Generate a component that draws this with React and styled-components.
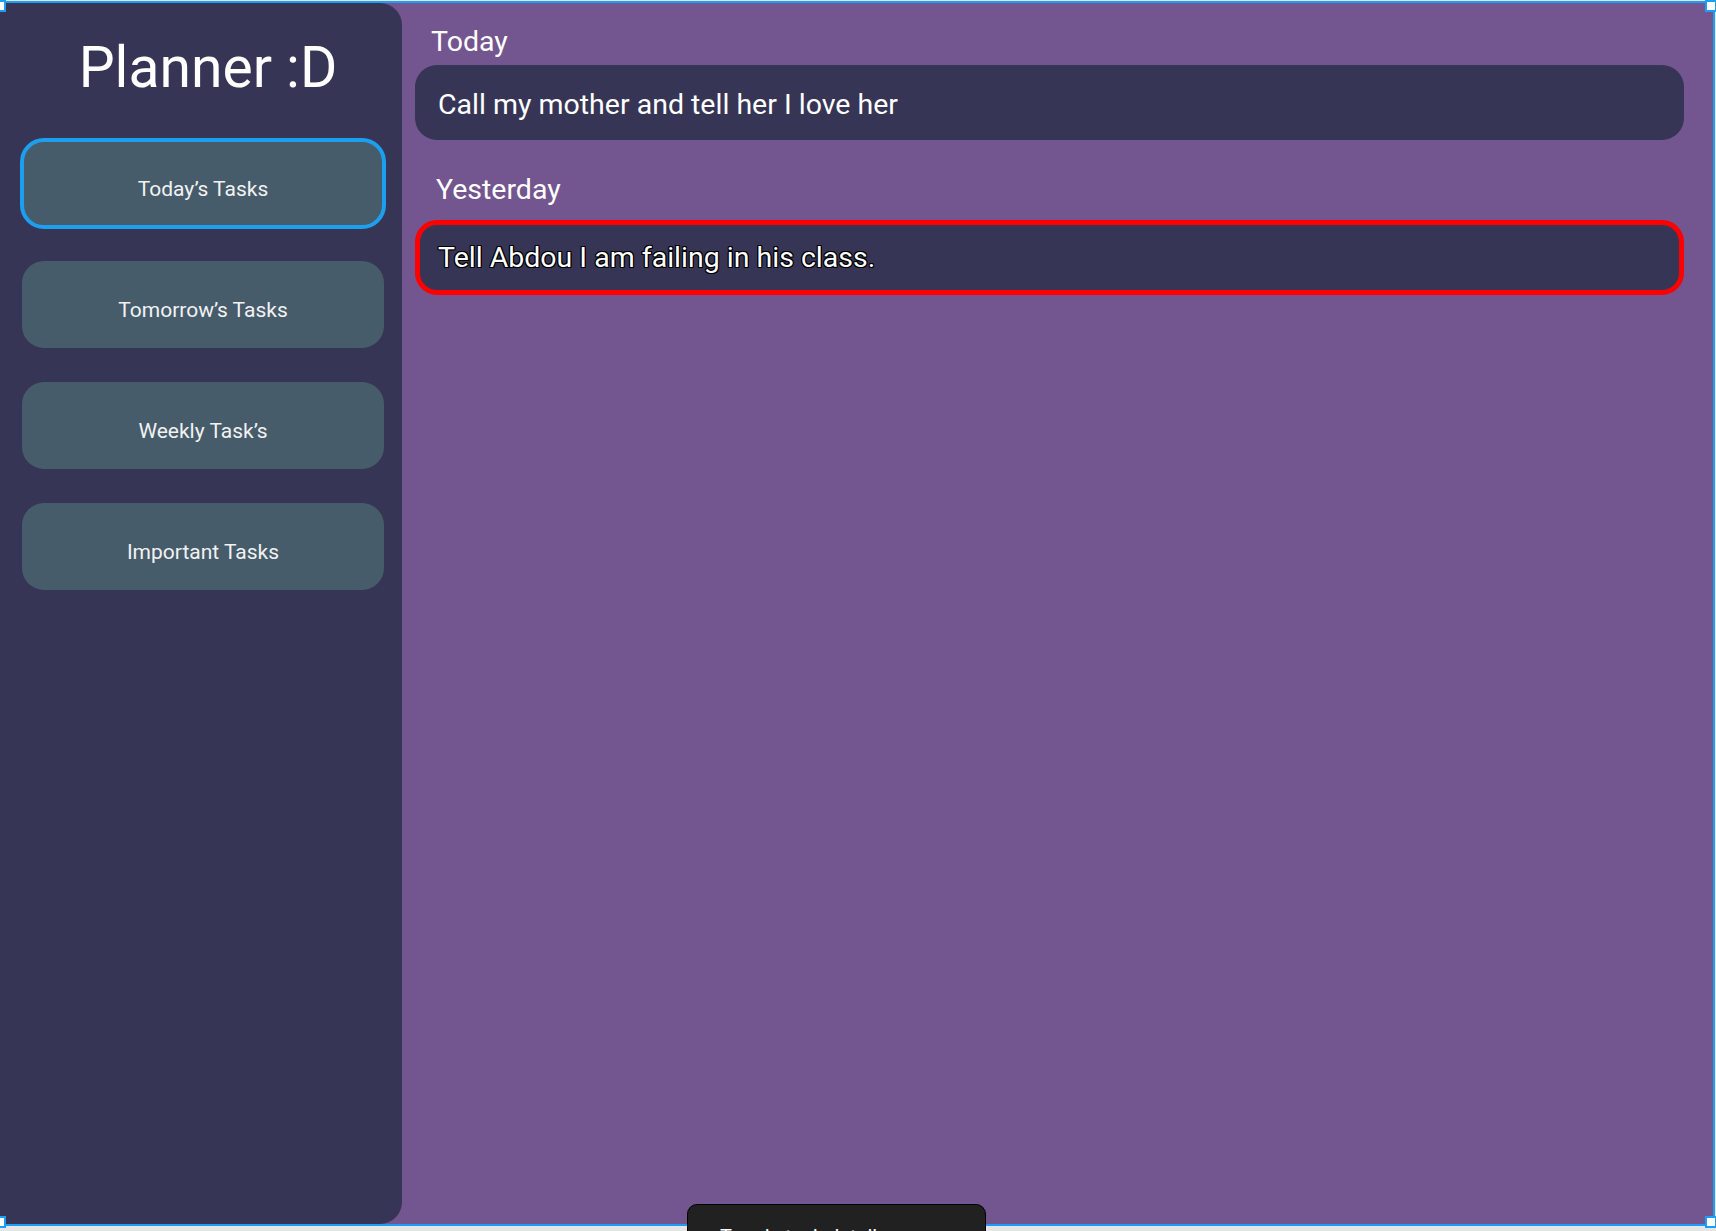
import React from "react";
import styled, { createGlobalStyle, css } from "styled-components";

const Global = createGlobalStyle`
  html, body {
    margin: 0;
    padding: 0;
    height: 100%;
    overflow: hidden;
    background: #e5e5e5;
    font-family: Roboto, "Noto Sans", "Liberation Sans", sans-serif;
  }
  * { box-sizing: border-box; }
`;

const Canvas = styled.div`
  position: relative;
  width: 1716px;
  height: 1231px;
  padding-top: 1px;
`;

const Frame = styled.div`
  position: relative;
  display: flex;
  width: 1715px;
  height: 1225px;
  border-top: 2px solid #1b9ff6;
  border-right: 2px solid #1b9ff6;
  border-bottom: 2px solid #1b9ff6;
  background: #73558f;
`;

const Sidebar = styled.aside`
  display: flex;
  flex-direction: column;
  width: 402px;
  flex-shrink: 0;
  background: #373555;
  border-radius: 0 22px 22px 0;
  padding: 30px 18px 0 22px;
`;

const Title = styled.h1`
  margin: 0;
  font-size: 57px;
  line-height: 70px;
  font-weight: 400;
  color: #ffffff;
  text-align: center;
  padding-left: 10px;
`;

const NavList = styled.nav`
  display: flex;
  flex-direction: column;
  gap: 34px;
  margin-top: 37px;
`;

const NavButton = styled.button`
  height: 87px;
  width: 100%;
  border: none;
  border-radius: 22px;
  background: #465c6a;
  color: #f2f2f2;
  font-family: inherit;
  font-size: 21px;
  font-weight: 400;
  padding: 11px 0 0;
  cursor: pointer;
  ${(p) =>
    p.$active &&
    css`
      outline: 4px solid #1d9ff0;
      outline-offset: -2px;
    `}
`;

const Main = styled.main`
  flex: 1;
  display: flex;
  flex-direction: column;
  padding: 24px 29px 0 13px;
`;

const Label = styled.h2`
  margin: ${(p) => p.$top}px 0 ${(p) => p.$gap}px;
  padding-left: ${(p) => p.$indent}px;
  font-size: 28.5px;
  line-height: 30px;
  font-weight: 400;
  color: #ffffff;
`;

const Card = styled.div`
  display: flex;
  align-items: center;
  height: 75px;
  border-radius: 22px;
  background: #373555;
  padding: 4px 0 0 23px;
  font-size: 28.5px;
  color: #ffffff;
  ${(p) =>
    p.$flagged &&
    css`
      border: 5px solid #ff0000;
      padding: 0 0 0 18px;
      text-shadow: -1px -1px 0 #000, 1px -1px 0 #000, -1px 1px 0 #000,
        1px 1px 0 #000, 0 1px 0 #000, 0 -1px 0 #000, 1px 0 0 #000,
        -1px 0 0 #000;
    `}
`;

const Handle = styled.span`
  position: absolute;
  width: 12px;
  height: 12px;
  background: #ffffff;
  border: 2px solid #1b9ff6;
  top: ${(p) => p.$top}px;
  left: ${(p) => p.$left}px;
`;

const Toast = styled.div`
  position: absolute;
  left: 687px;
  top: 1204px;
  width: 299px;
  height: 60px;
  background: #212121;
  border: 1px solid #000;
  border-radius: 10px 10px 0 0;
  padding: 20px 0 0 32px;
  color: #ffffff;
  font-size: 20px;
  line-height: 24px;
  white-space: nowrap;
`;

const tabs = [
  { label: "Today\u2019s Tasks", active: true },
  { label: "Tomorrow\u2019s Tasks" },
  { label: "Weekly Task\u2019s" },
  { label: "Important Tasks" },
];

export default function App() {
  return (
    <>
      <Global />
      <Canvas>
        <Frame>
          <Sidebar>
            <Title>Planner :D</Title>
            <NavList>
              {tabs.map((t) => (
                <NavButton key={t.label} $active={t.active}>
                  {t.label}
                </NavButton>
              ))}
            </NavList>
          </Sidebar>
          <Main>
            <Label $top={0} $gap={8} $indent={16}>
              Today
            </Label>
            <Card>Call my mother and tell her I love her</Card>
            <Label $top={35} $gap={15} $indent={21}>
              Yesterday
            </Label>
            <Card $flagged>Tell Abdou I am failing in his class.</Card>
          </Main>
          <Handle $top={-3} $left={-6} />
          <Handle $top={-3} $left={1705} />
          <Handle $top={1213} $left={-6} />
          <Handle $top={1213} $left={1705} />
        </Frame>
        <Toast>Toggle task details</Toast>
      </Canvas>
    </>
  );
}
